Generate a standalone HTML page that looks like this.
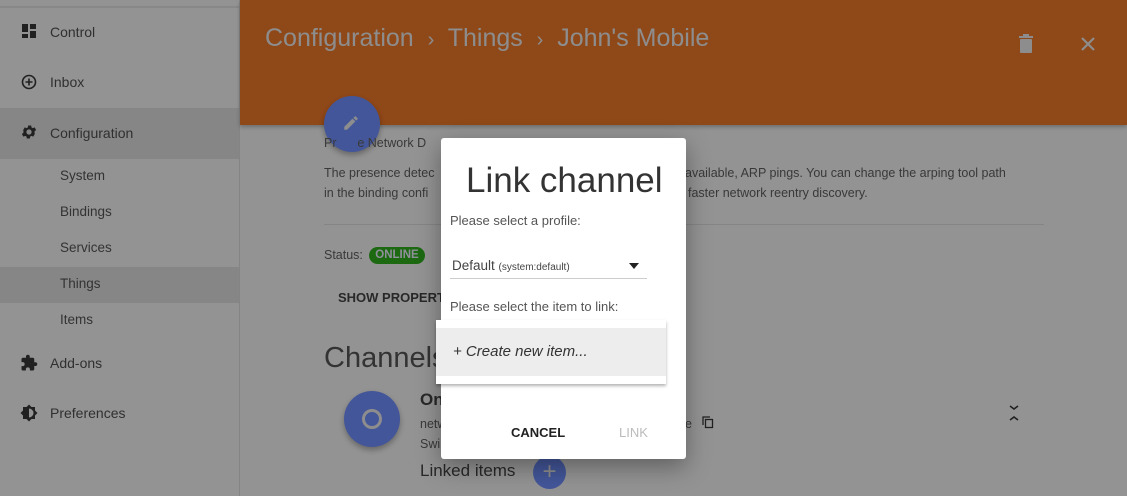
<!DOCTYPE html>
<html><head><meta charset="utf-8"><style>
*{margin:0;padding:0;box-sizing:border-box}
body{width:1127px;height:496px;overflow:hidden;background:#f5f5f5;font-family:"Liberation Sans",sans-serif;position:relative;color:#444}
.abs{position:absolute}
.side{left:0;top:0;width:240px;height:496px;background:#f5f5f5;border-right:1px solid #ddd}
.topline{left:0;top:6px;width:239px;height:2px;background:#e3e3e3}
.nav{left:0;width:239px;font-size:14px;color:#505050}
.nav span{position:absolute;left:50px}
.sub{position:absolute;left:60px;font-size:13.5px;color:#555}
.hdr{left:240px;top:0;width:887px;height:125px;background:#ef7829;box-shadow:0 2px 4px rgba(0,0,0,.25)}
.crumb{left:265px;top:24px;font-size:25px;color:#ececec;white-space:nowrap}
.txt{font-size:12.5px;color:#606060;white-space:nowrap}
.scrim{left:0;top:0;width:1127px;height:496px;background:rgba(0,0,0,.4)}
.dlg{left:441px;top:138px;width:245px;height:321px;background:#fff;border-radius:3px;box-shadow:0 8px 24px rgba(0,0,0,.35)}
</style></head><body>
<div class="abs side"></div>
<div class="abs topline"></div>
<div class="abs nav" style="top:22px;height:20px"><svg class="abs" style="left:22px;top:2px" width="14" height="14"><rect x="0" y="0" width="6" height="8" fill="#383838"/><rect x="8" y="0" width="6" height="5" fill="#383838"/><rect x="0" y="10" width="6" height="4" fill="#383838"/><rect x="8" y="7" width="6" height="7" fill="#383838"/></svg><span style="top:2px">Control</span></div>
<div class="abs nav" style="top:72px;height:20px"><svg class="abs" style="left:21px;top:2px" width="16" height="16"><circle cx="8" cy="8" r="6.5" fill="none" stroke="#383838" stroke-width="1.6"/><path d="M8 4.5v7M4.5 8h7" stroke="#383838" stroke-width="1.6"/></svg><span style="top:2px">Inbox</span></div>
<div class="abs" style="left:0;top:108px;width:239px;height:51px;background:#e0e0e0"></div>
<div class="abs nav" style="top:123px;height:20px"><svg class="abs" style="left:20px;top:0px" width="18" height="18" viewBox="0 0 24 24"><path fill="#383838" d="M19.4 13a7.5 7.5 0 000-2l2.1-1.6-2-3.5-2.5 1a7 7 0 00-1.7-1l-.4-2.6h-4l-.4 2.6a7 7 0 00-1.7 1l-2.5-1-2 3.5L4.6 11a7.5 7.5 0 000 2l-2.1 1.6 2 3.5 2.5-1a7 7 0 001.7 1l.4 2.6h4l.4-2.6a7 7 0 001.7-1l2.5 1 2-3.5zM12 15.5a3.5 3.5 0 110-7 3.5 3.5 0 010 7z"/></svg><span style="top:2px">Configuration</span></div>
<div class="sub" style="top:168px">System</div>
<div class="sub" style="top:204px">Bindings</div>
<div class="sub" style="top:240px">Services</div>
<div class="abs" style="left:0;top:267px;width:239px;height:36px;background:#e0e0e0"></div>
<div class="sub" style="top:276px">Things</div>
<div class="sub" style="top:312px">Items</div>
<div class="abs nav" style="top:353px;height:20px"><svg class="abs" style="left:20px;top:1px" width="18" height="18" viewBox="0 0 24 24"><path fill="#383838" d="M20.5 11H19V7a2 2 0 00-2-2h-4V3.5a2.5 2.5 0 00-5 0V5H4a2 2 0 00-2 2v3.8h1.5a2.7 2.7 0 010 5.4H2V20a2 2 0 002 2h3.8v-1.5a2.7 2.7 0 015.4 0V22H17a2 2 0 002-2v-4h1.5a2.5 2.5 0 000-5z"/></svg><span style="top:2px">Add-ons</span></div>
<div class="abs nav" style="top:403px;height:20px"><svg class="abs" style="left:20px;top:1px" width="18" height="18" viewBox="0 0 24 24"><path fill="#383838" d="M20 8.7V4h-4.7L12 .7 8.7 4H4v4.7L.7 12 4 15.3V20h4.7l3.3 3.3 3.3-3.3H20v-4.7l3.3-3.3zM12 18V6a6 6 0 010 12z"/></svg><span style="top:2px">Preferences</span></div>

<div class="abs hdr"></div>
<div class="abs crumb">Configuration &nbsp;<span style="font-size:20px">›</span>&nbsp; Things &nbsp;<span style="font-size:20px">›</span>&nbsp; John's Mobile</div>
<svg class="abs" style="left:1018px;top:34px" width="16" height="20" viewBox="0 0 16 20"><rect x="1" y="2" width="14" height="2" fill="#ececec"/><rect x="5" y="0" width="6" height="2" fill="#ececec"/><rect x="2" y="5" width="12" height="14" rx="1" fill="#ececec"/></svg>
<svg class="abs" style="left:1081px;top:37px" width="14" height="14"><path d="M1 1l12 12M13 1L1 13" stroke="#ececec" stroke-width="2.2"/></svg>
<div class="abs" style="left:324px;top:96px;width:56px;height:56px;border-radius:50%;background:#7190ff;box-shadow:0 3px 6px rgba(0,0,0,.3)"></div>
<svg class="abs" style="left:342px;top:114px" width="18" height="18" viewBox="0 0 24 24"><path fill="#ececec" d="M3 17.2V21h3.8L17.8 9.9l-3.8-3.7zM20.7 7a1 1 0 000-1.4l-2.3-2.3a1 1 0 00-1.4 0l-1.8 1.8 3.7 3.8z"/></svg>

<div class="abs txt" style="left:324px;top:136px">Pr&nbsp;&nbsp;&nbsp;&nbsp;&nbsp;&nbsp;e Network D</div>
<div class="abs txt" style="left:324px;top:166px">The presence detec</div>
<div class="abs txt" style="left:324px;top:186px">in the binding confi</div>
<div class="abs txt" style="left:685px;top:166px">available, ARP pings. You can change the arping tool path</div>
<div class="abs txt" style="left:688px;top:186px">faster network reentry discovery.</div>
<div class="abs" style="left:324px;top:224px;width:720px;height:1px;background:#dedede"></div>
<div class="abs txt" style="left:324px;top:248px">Status:</div>
<div class="abs" style="left:369px;top:247px;width:56px;height:17px;border-radius:9px;background:#30b01e;color:#eef;font-size:11.5px;font-weight:bold;text-align:center;line-height:17px">ONLINE</div>
<div class="abs" style="left:338px;top:290px;font-size:13px;font-weight:bold;color:#444">SHOW PROPERT</div>
<div class="abs" style="left:324px;top:342px;font-size:29px;color:#555">Channels</div>
<div class="abs" style="left:344px;top:391px;width:56px;height:56px;border-radius:50%;background:#7190ff;box-shadow:0 3px 6px rgba(0,0,0,.3)"></div>
<div class="abs" style="left:362px;top:409px;width:20px;height:20px;border-radius:50%;border:3px solid #ececec"></div>
<div class="abs" style="left:420px;top:390px;font-size:17px;font-weight:bold;color:#444">On</div>
<div class="abs txt" style="left:420px;top:417px">netw</div>
<div class="abs txt" style="left:420px;top:437px">Swi</div>
<div class="abs txt" style="left:685px;top:417px">e</div>
<svg class="abs" style="left:702px;top:416px" width="12" height="13"><rect x="3.5" y="3.5" width="7" height="8" fill="none" stroke="#383838" stroke-width="1.3"/><path d="M1 9V1h7" fill="none" stroke="#383838" stroke-width="1.3"/></svg>
<svg class="abs" style="left:1008px;top:405px" width="12" height="16"><path d="M2 1l4 3 4-3M2 15l4-3 4 3" fill="none" stroke="#383838" stroke-width="1.6"/></svg>
<div class="abs" style="left:420px;top:461px;font-size:17px;color:#444">Linked items</div>
<div class="abs" style="left:533px;top:456px;width:33px;height:33px;border-radius:50%;background:#7190ff;color:#ececec;font-size:24px;text-align:center;line-height:31px">+</div>

<div class="abs scrim"></div>

<div class="abs dlg"></div>
<div class="abs" style="left:466px;top:161px;font-size:35px;color:#333">Link channel</div>
<div class="abs" style="left:450px;top:213px;font-size:13px;color:#555">Please select a profile:</div>
<div class="abs" style="left:452px;top:258px;font-size:13.5px;color:#444">Default <span style="font-size:10px">(system:default)</span></div>
<svg class="abs" style="left:629px;top:263px" width="10" height="6"><path d="M0 0h10L5 6z" fill="#222"/></svg>
<div class="abs" style="left:450px;top:278px;width:197px;height:1px;background:#ccc"></div>
<div class="abs" style="left:450px;top:299px;font-size:13px;color:#555">Please select the item to link:</div>
<div class="abs" style="left:436px;top:320px;width:230px;height:64px;background:#fff;box-shadow:0 2px 3px rgba(0,0,0,.3)"></div>
<div class="abs" style="left:436px;top:328px;width:230px;height:48px;background:#ededed"></div>
<div class="abs" style="left:453px;top:343px;font-size:15px;font-style:italic;color:#333">+ Create new item...</div>
<div class="abs" style="left:511px;top:425px;font-size:13px;font-weight:bold;color:#222">CANCEL</div>
<div class="abs" style="left:619px;top:425px;font-size:13px;color:#bbb">LINK</div>
</body></html>
